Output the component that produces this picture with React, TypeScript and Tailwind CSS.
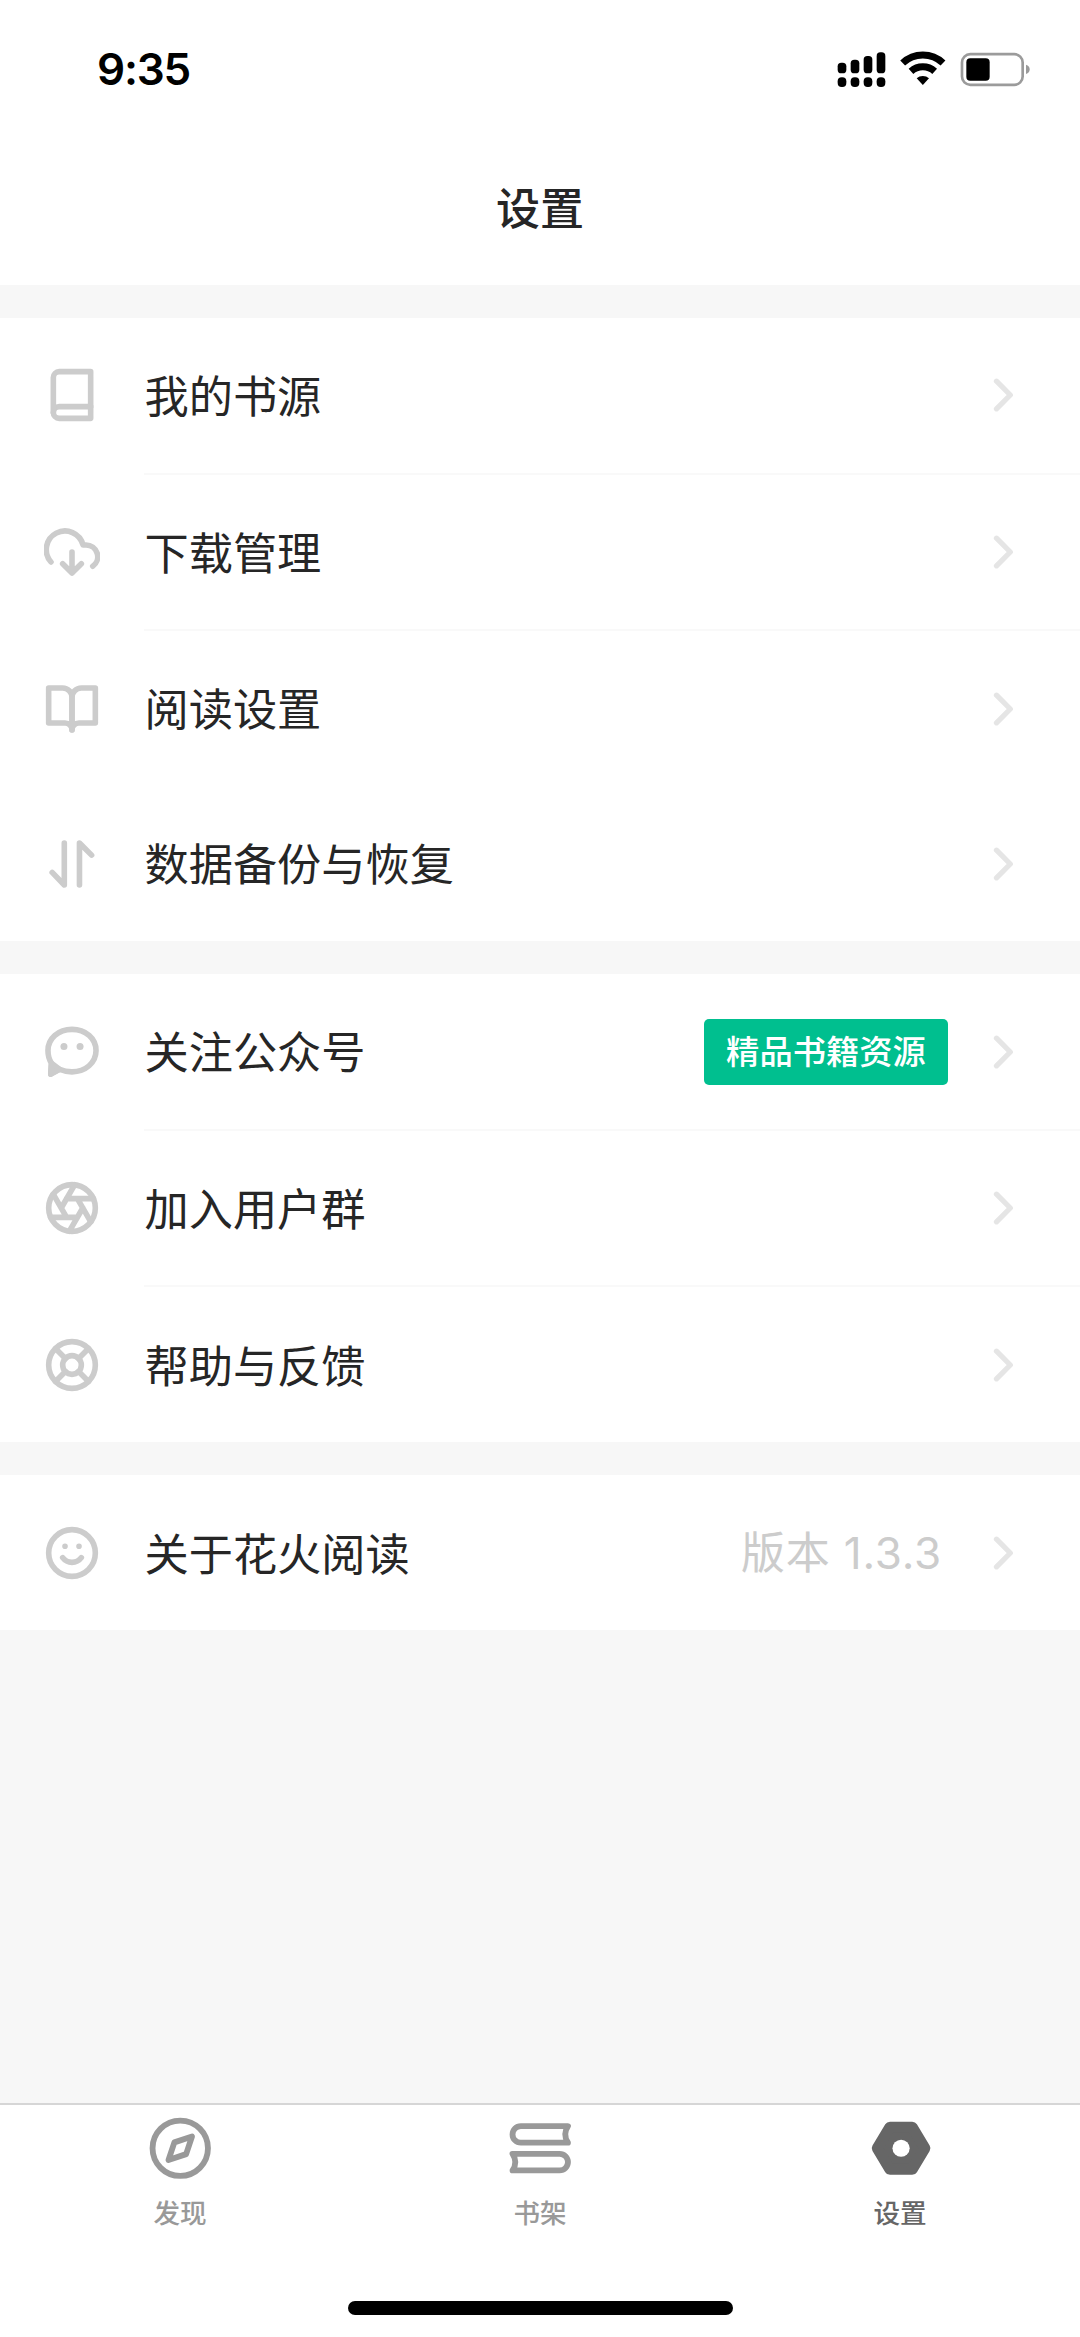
import type { ReactNode } from 'react'

type Item = { label: string; icon: ReactNode; extra?: ReactNode; divider?: boolean }

function Icon({ children }: { children: ReactNode }) {
  return (
    <svg
      viewBox="0 0 24 24"
      className="h-[56px] w-[56px] shrink-0"
      fill="none"
      stroke="currentColor"
      strokeWidth={2.4}
      strokeLinecap="round"
      strokeLinejoin="round"
    >
      {children}
    </svg>
  )
}

const book = (
  <Icon>
    <path d="M4 19.5A2.5 2.5 0 0 1 6.5 17H20" />
    <path d="M6.5 2H20v20H6.5A2.5 2.5 0 0 1 4 19.5v-15A2.5 2.5 0 0 1 6.5 2z" />
  </Icon>
)

const cloud = (
  <Icon>
    <path d="M8 17l4 4 4-4M12 12v9" />
    <path d="M20.88 18.09A5 5 0 0 0 18 9h-1.26A8 8 0 1 0 3 16.29" />
  </Icon>
)

const bookOpen = (
  <Icon>
    <path d="M2 3h6a4 4 0 0 1 4 4v14a3 3 0 0 0-3-3H2z" />
    <path d="M22 3h-6a4 4 0 0 0-4 4v14a3 3 0 0 1 3-3h7z" />
  </Icon>
)

const transfer = (
  <Icon>
    <path d="M8.700 3v18L3.500 15.600M15.200 21V3l5.200 5.200" />
  </Icon>
)

const chat = (
  <Icon>
    <path d="M3.2 16.8C2.2 15.3 1.7 13.4 1.7 11.4 1.7 6.2 6.2 2.3 12 2.3s10.3 3.9 10.3 9.1-4.5 9.1-10.3 9.1c-2 0-3.800-.4-5.400-1.100L2.900 21.500z" />
    <path d="M3.200 16.800L2.900 21.500l3.700-2.100z" fill="currentColor" />
    <circle cx="8.550" cy="9.600" r="1.500" fill="currentColor" stroke="none" />
    <circle cx="15.450" cy="9.600" r="1.500" fill="currentColor" stroke="none" />
  </Icon>
)

const aperture = (
  <Icon>
    <circle cx="12" cy="12" r="10" />
    <path d="M14.31 8l5.74 9.94M9.69 8h11.48M7.38 12l5.74-9.94M9.69 16L3.95 6.06M14.31 16H2.83M16.62 12l-5.74 9.94" />
  </Icon>
)

const lifebuoy = (
  <Icon>
    <circle cx="12" cy="12" r="10" />
    <circle cx="12" cy="12" r="4" />
    <path d="M4.93 4.93l4.24 4.24M14.83 14.83l4.24 4.24M14.83 9.17l4.24-4.24M4.93 19.07l4.24-4.24" />
  </Icon>
)

const smile = (
  <Icon>
    <circle cx="12" cy="12" r="10" />
    <path d="M8 14s1.5 2 4 2 4-2 4-2M9 9.100h.01M15 9.100h.01" />
  </Icon>
)

const groups: Item[][] = [
  [
    { label: '我的书源', icon: book, divider: true },
    { label: '下载管理', icon: cloud, divider: true },
    { label: '阅读设置', icon: bookOpen },
    { label: '数据备份与恢复', icon: transfer },
  ],
  [
    {
      label: '关注公众号',
      icon: chat,
      divider: true,
      extra: (
        <span className="mr-[45px] flex h-[66px] w-[244px] items-center justify-center rounded-[5px] bg-[#00bf8f] pt-[2px] text-[33.3px] leading-none font-medium text-white">
          精品书籍资源
        </span>
      ),
    },
    { label: '加入用户群', icon: aperture, divider: true },
    { label: '帮助与反馈', icon: lifebuoy },
  ],
  [
    {
      label: '关于花火阅读',
      icon: smile,
      extra: <span className="mr-[51px] text-[44px] leading-none tracking-[0.8px] text-[#ccc]">版本 1.3.3</span>,
    },
  ],
]

function Row({ item }: { item: Item }) {
  return (
    <>
      <div className={`flex items-center pr-[65px] pl-[44px] text-[#ccc] ${item.divider ? 'h-[154.4px]' : 'h-[155px]'}`}>
        {item.icon}
        <span className="mt-[4px] ml-[44.5px] flex-1 text-[44.2px] leading-none text-[#262626]">{item.label}</span>
        {item.extra}
        <svg viewBox="0 0 22 34" className="h-[34px] w-[22px]" fill="none" stroke="#e5e5e5" strokeWidth={5.3}>
          <path d="M3.5 3.2L17.3 17 3.5 30.8" strokeLinecap="round" strokeLinejoin="round" />
        </svg>
      </div>
      {item.divider && <div className="ml-36 h-[2px] bg-[#f9f9f9]" />}
    </>
  )
}

function StatusIcons() {
  return (
    <svg viewBox="0 0 600 120" className="h-[40px] w-[200px]">
      <rect x="11" y="44" width="26" height="32" rx="11" />
      <rect x="50" y="35" width="26" height="41" rx="11" />
      <rect x="89" y="24" width="26" height="52" rx="11" />
      <rect x="128" y="13" width="26" height="63" rx="11" />
      {[11, 50, 89, 128].map((x) => (
        <rect key={x} x={x} y="88" width="26" height="29" rx="12" />
      ))}
      <path d="M206 45a88 88 0 0 1 121 0M231 70a53 53 0 0 1 71 0" fill="none" stroke="#000" strokeWidth="21" />
      <path d="M248 91a27 27 0 0 1 37 0l-18.5 20z" />
      <rect x="384" y="18.5" width="182" height="92" rx="25" fill="none" stroke="#9b9b9b" strokeWidth="8" />
      <rect x="397" y="31" width="70" height="67" rx="12" />
      <path d="M576 50q11 3 11 14t-11 14z" fill="#9b9b9b" />
    </svg>
  )
}

function Tab({ label, active, children }: { label: string; active?: boolean; children: ReactNode }) {
  return (
    <div className={`flex flex-1 flex-col items-center pt-[10px] ${active ? 'text-[#666]' : 'text-[#999]'}`}>
      <svg
        viewBox="0 0 24 24"
        className="h-[66.5px] w-[66.5px]"
        fill="none"
        stroke="currentColor"
        strokeWidth={2.1}
        strokeLinecap="round"
        strokeLinejoin="round"
      >
        {children}
      </svg>
      <span className="mt-[18px] text-[26.6px] leading-none font-medium">{label}</span>
    </div>
  )
}

export default function App() {
  return (
    <div className="flex h-[2337px] w-[1080px] flex-col overflow-hidden bg-[#f7f7f7] font-[Inter,'Noto_Sans_CJK_SC',sans-serif]">
      <header className="h-[285px] shrink-0 bg-white">
        <div className="flex h-[135px] items-center justify-between pr-[46px] pl-[97px]">
          <span className="mt-[2px] text-[44px] leading-none font-semibold tracking-[-1.2px] text-black">9:35</span>
          <StatusIcons />
        </div>
        <h1 className="mt-[52px] text-center text-[44px] leading-none font-medium text-[#262626]">设置</h1>
      </header>

      <main className="flex flex-1 flex-col gap-[33.3px] pt-[33.3px]">
        {groups.map((items, i) => (
          <section key={i} className="bg-white">
            {items.map((item) => (
              <Row key={item.label} item={item} />
            ))}
          </section>
        ))}
      </main>

      <nav className="h-[234px] shrink-0 border-t-2 border-[#d6d6d6] bg-white">
        <div className="flex h-[196px]">
          <Tab label="发现">
            <circle cx="12" cy="12" r="10" />
            <path d="M16.24 7.76l-2.12 6.36-6.36 2.12 2.12-6.36z" />
          </Tab>
          <Tab label="书架">
            <path d="M22 4H5a3 3 0 0 0 0 6h17q-2-3 0-6z" />
            <path d="M2 14h17a3 3 0 0 1 0 6H2q2-3 0-6z" />
          </Tab>
          <Tab label="设置" active>
            <path d="M8.3 4.4h8L20.9 12l-4.6 7.6h-8L3.7 12z" fill="currentColor" strokeWidth="4" />
            <circle cx="12.3" cy="12" r="3.1" fill="#fff" stroke="none" />
          </Tab>
        </div>
        <div className="mx-auto h-[14px] w-[385px] rounded-full bg-black" />
      </nav>
    </div>
  )
}
